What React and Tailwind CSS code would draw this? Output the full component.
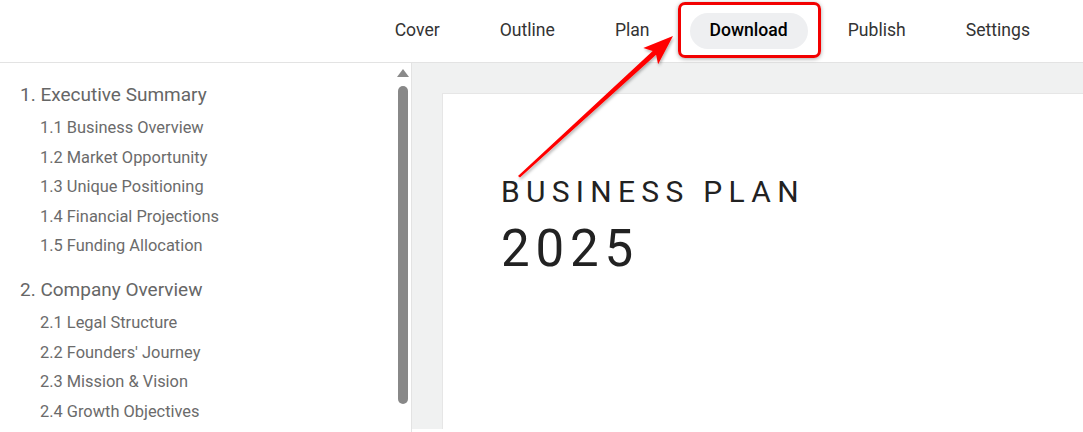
import React from "react";

const tabs = ["Cover", "Outline", "Plan", "Download", "Publish", "Settings"];

const outline = [
  {
    title: "1. Executive Summary",
    items: ["1.1 Business Overview", "1.2 Market Opportunity", "1.3 Unique Positioning", "1.4 Financial Projections", "1.5 Funding Allocation"],
  },
  {
    title: "2. Company Overview",
    items: ["2.1 Legal Structure", "2.2 Founders' Journey", "2.3 Mission & Vision", "2.4 Growth Objectives"],
  },
];

export default function App() {
  return (
    <div className="relative w-[1083px] h-[432px] overflow-hidden bg-white font-['Roboto','Liberation_Sans',sans-serif]">
      {/* header */}
      <header className="h-[63px] pb-[1px] border-b border-[#e3e3e3] flex items-center justify-end gap-5 pr-[33px]">
        {tabs.map(t => (
          <div
            key={t}
            className={`h-9 px-5 rounded-full flex items-center text-[17.6px] ${t === "Download" ? "bg-[#eeeff1] text-black font-medium" : "text-[#333]"}`}
          >
            {t}
          </div>
        ))}
      </header>

      <div className="flex h-[369px]">
        {/* sidebar */}
        <aside className="w-[412px] shrink-0 flex border-r border-[#e3e3e3]">
          <div className="flex-1 pl-5 pt-[19px]">
            {outline.map(s => (
              <div key={s.title} className="mb-[16px]">
                <div className="text-[19px] text-[#666] leading-[26px]">{s.title}</div>
                <div className="pl-5 pt-[5px]">
                  {s.items.map(i => (
                    <div key={i} className="text-[16.4px] text-[#6b6b6b] leading-[29.6px]">{i}</div>
                  ))}
                </div>
              </div>
            ))}
          </div>
          <div className="w-[15px] mr-[1px] flex flex-col items-center pt-[6px]">
            <div className="w-0 h-0 border-l-[6px] border-r-[6px] border-b-[8px] border-l-transparent border-r-transparent border-b-[#8a8a8a]" />
            <div className="mt-[9px] w-[10px] h-[318px] rounded-full bg-[#888]" />
          </div>
        </aside>

        {/* main */}
        <main className="flex-1 bg-[#f0f1f1] pl-[30px] pt-[30px] h-[366px]">
          <div className="bg-white h-full border-l border-t border-[#e6e6e6] pl-[58px] pt-[83px]">
            <div className="text-[30px] tracking-[0.21em] text-[#222] leading-none">BUSINESS PLAN</div>
            <div className="mt-[16px] text-[51px] tracking-[0.115em] text-[#222] leading-none">2025</div>
          </div>
        </main>
      </div>

      {/* highlight box */}
      <div className="absolute left-[678px] top-[2px] w-[143px] h-[56px] border-[3px] border-[#f20000] rounded-[7px] shadow-[0_1px_4px_rgba(0,0,0,0.35)]" />

      {/* arrow */}
      <svg className="absolute left-0 top-0 pointer-events-none" width="1083" height="432">
        <defs>
          <filter id="sh" x="-20%" y="-20%" width="140%" height="140%">
            <feDropShadow dx="1" dy="2" stdDeviation="1.5" floodColor="#000" floodOpacity="0.3" />
          </filter>
        </defs>
        <path
          d="M518 176 L652.7 50.9 L643.3 47.9 L673 36 L658.1 64.3 L656.1 54.7 L520 177.5 Z"
          fill="#ff0000"
          filter="url(#sh)"
        />
      </svg>
    </div>
  );
}
